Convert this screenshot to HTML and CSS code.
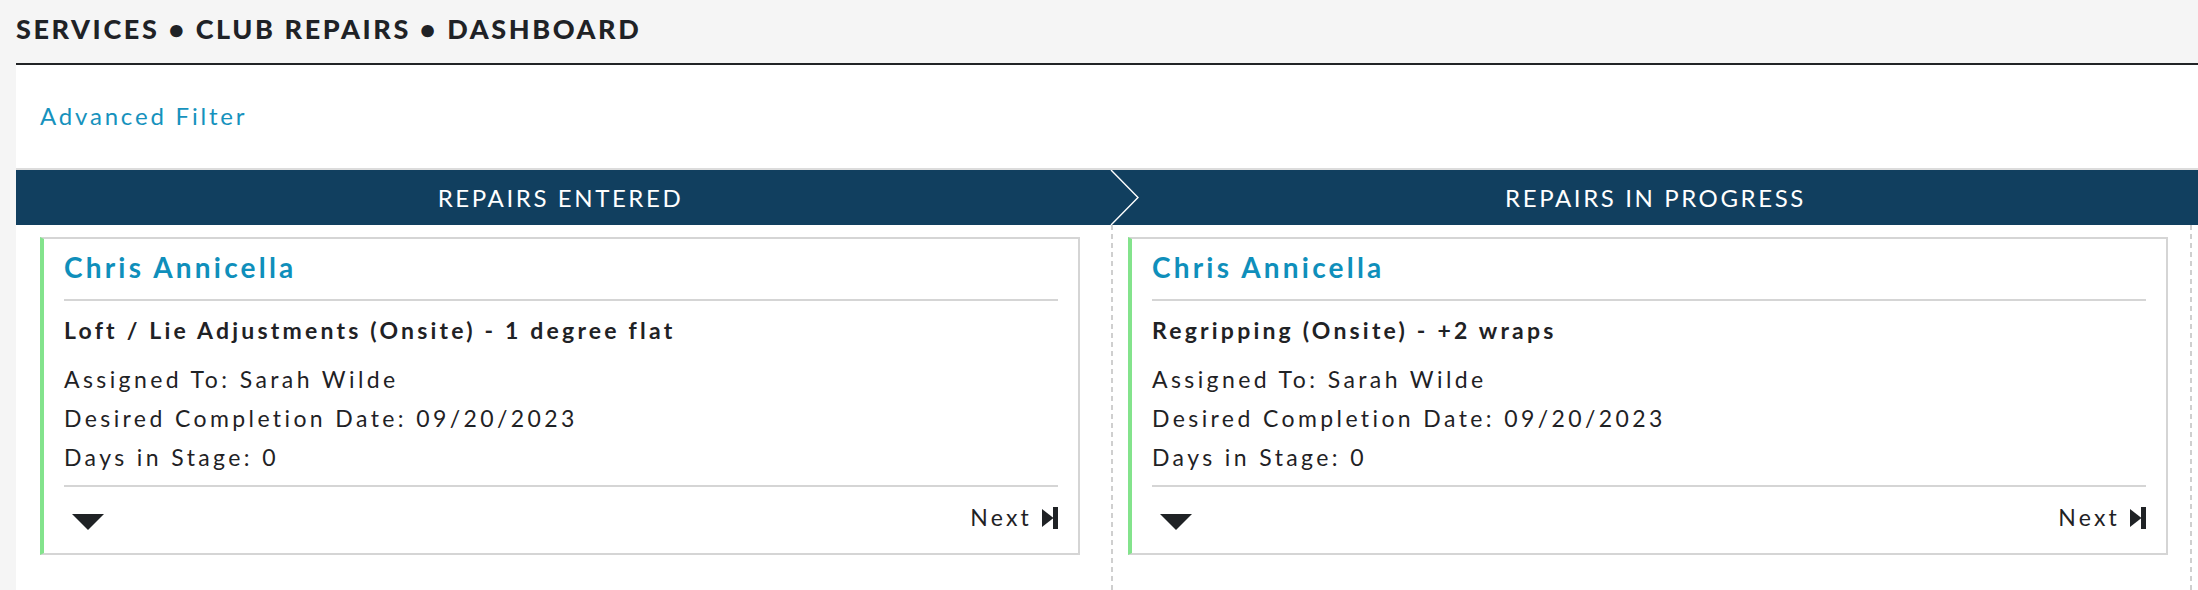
FILE: index.html
```html
<!DOCTYPE html>
<html lang="en">
<head>
<meta charset="utf-8">
<title>Club Repairs Dashboard</title>
<link rel="stylesheet" href="styles.css">
</head>
<body>
<header class="topbar">
  <h1 class="crumbs">SERVICES &bull; CLUB REPAIRS &bull; DASHBOARD</h1>
</header>
<main class="panel">
  <div class="filter-row">
    <a class="filter-link" href="#">Advanced Filter</a>
  </div>
  <section class="board">
    <div class="stages">
      <div class="stage stage-first">
        <span>REPAIRS ENTERED</span>
        <svg class="stage-arrow" viewBox="0 0 30 55" preserveAspectRatio="none" aria-hidden="true">
          <polyline points="1,0 28,27.5 1,55" fill="none" stroke="#ffffff" stroke-width="1.4"/>
        </svg>
      </div>
      <div class="stage"><span>REPAIRS IN PROGRESS</span></div>
    </div>
    <div class="lanes">
      <div class="lane lane-first">
        <article class="card">
          <h2 class="card-name">Chris Annicella</h2>
          <h3 class="card-service">Loft / Lie Adjustments (Onsite) - 1 degree flat</h3>
          <ul class="card-details">
            <li>Assigned To: Sarah Wilde</li>
            <li>Desired Completion Date: 09/20/2023</li>
            <li>Days in Stage: 0</li>
          </ul>
          <div class="card-footer">
            <span class="caret"></span>
            <a class="next" href="#">Next
              <svg class="next-icon" viewBox="0 0 16 22" aria-hidden="true">
                <polygon points="0,2 11.5,11 0,20" fill="#1f2225"/>
                <rect x="11" y="0" width="5" height="22" fill="#1f2225"/>
              </svg>
            </a>
          </div>
        </article>
      </div>
      <div class="lane lane-second">
        <article class="card">
          <h2 class="card-name">Chris Annicella</h2>
          <h3 class="card-service">Regripping (Onsite) - +2 wraps</h3>
          <ul class="card-details">
            <li>Assigned To: Sarah Wilde</li>
            <li>Desired Completion Date: 09/20/2023</li>
            <li>Days in Stage: 0</li>
          </ul>
          <div class="card-footer">
            <span class="caret"></span>
            <a class="next" href="#">Next
              <svg class="next-icon" viewBox="0 0 16 22" aria-hidden="true">
                <polygon points="0,2 11.5,11 0,20" fill="#1f2225"/>
                <rect x="11" y="0" width="5" height="22" fill="#1f2225"/>
              </svg>
            </a>
          </div>
        </article>
      </div>
    </div>
  </section>
</main>
</body>
</html>
```

FILE: styles.css
```css
* { box-sizing: border-box; }

html, body {
  margin: 0;
  padding: 0;
  height: 100%;
}

body {
  background: #f5f5f5;
  font-family: Lato, "Liberation Sans", sans-serif;
  color: #1f2225;
  display: flex;
  flex-direction: column;
  overflow: hidden;
}

.topbar {
  padding: 13px 0 19px 16px;
}

.crumbs {
  margin: 0;
  font-size: 27px;
  line-height: 31px;
  font-weight: 900;
  letter-spacing: 2.6px;
  color: #1f2226;
}

.panel {
  flex: 1;
  margin-left: 16px;
  background: #ffffff;
  border-top: 2px solid #222426;
  display: flex;
  flex-direction: column;
}

.filter-row {
  padding: 37px 0 0 24px;
  height: 103px;
}

.filter-link {
  font-size: 24px;
  line-height: 28px;
  letter-spacing: 2.8px;
  color: #1692bd;
  text-decoration: none;
}

.board {
  flex: 1;
  display: flex;
  flex-direction: column;
}

.stages {
  display: grid;
  grid-template-columns: 1097px 1fr;
  background: #113f5f;
  border-top: 2px solid #dcdcdc;
  height: 57px;
}

.stage {
  height: 55px;
  display: flex;
  align-items: center;
  justify-content: center;
  color: #ffffff;
  font-size: 24px;
  letter-spacing: 2.6px;
}

.stage-first {
  position: relative;
  padding-right: 8px;
}

.stage-arrow {
  position: absolute;
  top: 0;
  left: calc(100% - 3px);
  width: 30px;
  height: 55px;
}

.lanes {
  flex: 1;
  display: grid;
  grid-template-columns: 1097px 1079px;
}

.lane {
  padding-top: 12px;
  background-image: repeating-linear-gradient(to bottom, #cfcfcf 0 5px, transparent 5px 9px);
  background-size: 2px 100%;
  background-position: right top;
  background-repeat: no-repeat;
}

.lane-first { padding-left: 24px; padding-right: 33px; }
.lane-second { padding-left: 15px; padding-right: 24px; }

.card {
  width: 1040px;
  border: 2px solid #d5d5d5;
  border-left: 4px solid #83e38c;
  padding: 12px 20px 0 20px;
}

.card-name {
  margin: 0;
  font-size: 28px;
  line-height: 33px;
  font-weight: 700;
  letter-spacing: 3.2px;
  color: #0f8fbb;
  padding-bottom: 15px;
  border-bottom: 2px solid #d5d5d5;
}

.card-service {
  margin: 15px 0 0 0;
  font-size: 23px;
  line-height: 28px;
  font-weight: 700;
  letter-spacing: 3.2px;
  color: #1f2225;
}

.card-details {
  list-style: none;
  margin: 16px 0 0 0;
  padding: 0 0 8px 0;
  font-size: 23px;
  line-height: 39px;
  letter-spacing: 3.4px;
  border-bottom: 2px solid #d5d5d5;
}

.card-footer {
  display: flex;
  justify-content: space-between;
  align-items: flex-start;
  padding: 16px 0 21px 0;
}

.caret {
  width: 32px;
  height: 16px;
  margin: 11px 0 0 8px;
  border-left: 16px solid transparent;
  border-right: 16px solid transparent;
  border-top: 16px solid #1f2225;
}

.next {
  display: flex;
  align-items: center;
  gap: 10px;
  font-size: 23px;
  line-height: 29px;
  letter-spacing: 3.2px;
  color: #1f2225;
  text-decoration: none;
}

.next-icon {
  width: 16px;
  height: 22px;
}
```
